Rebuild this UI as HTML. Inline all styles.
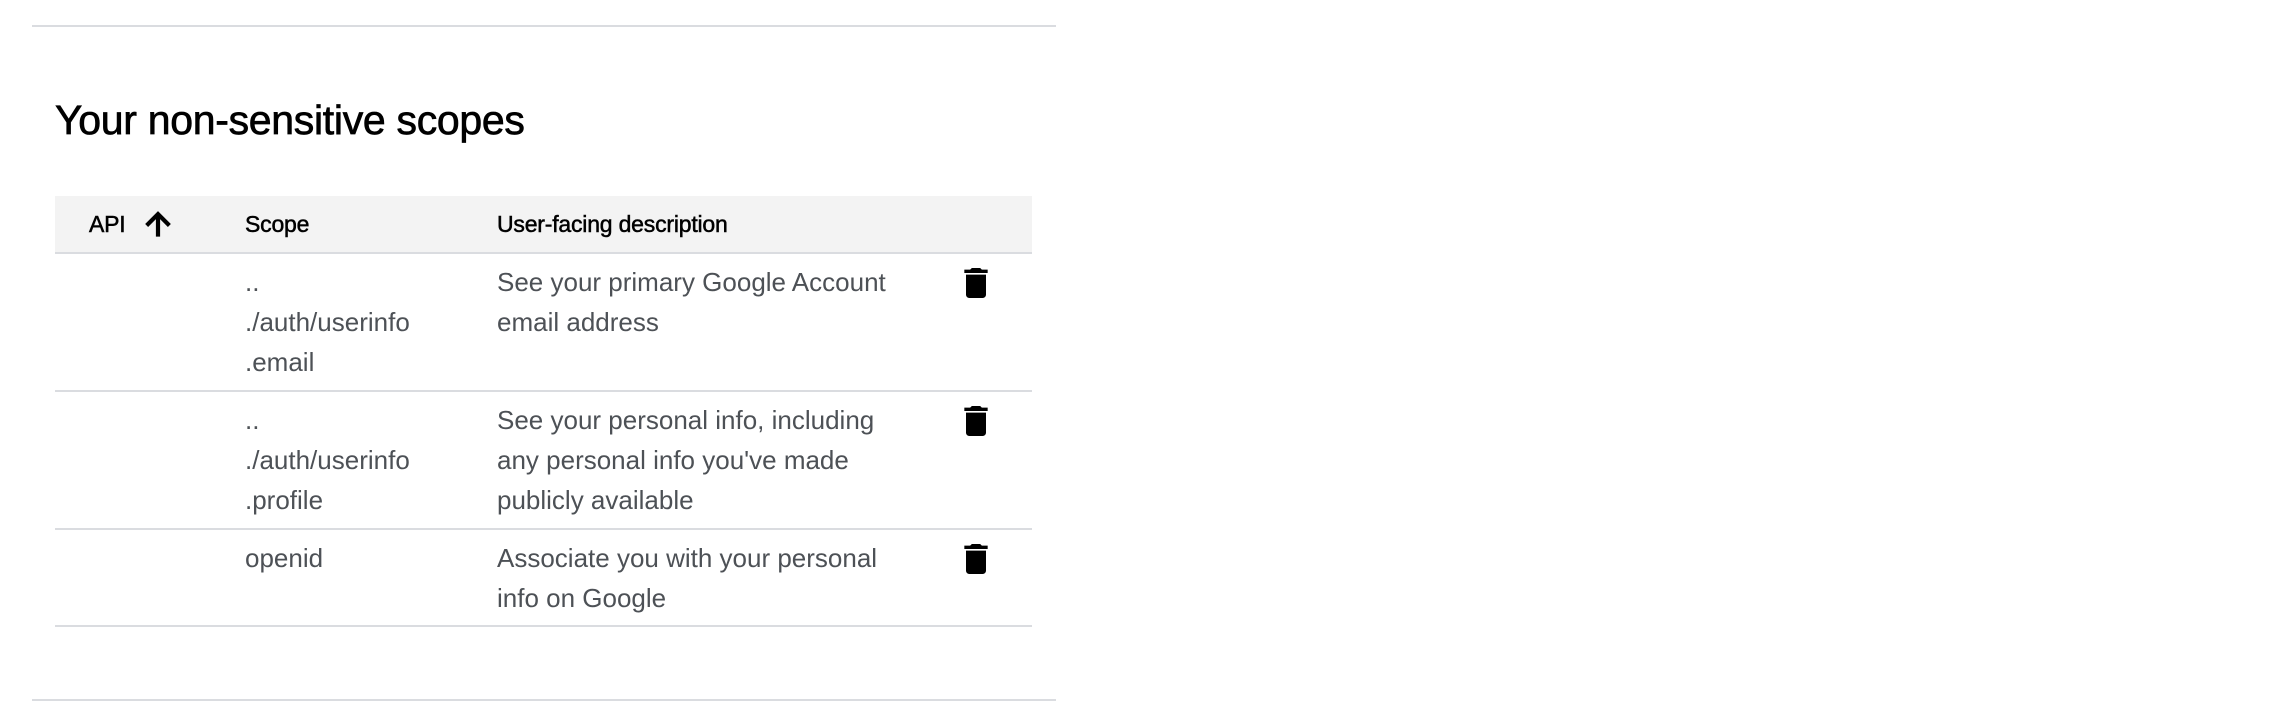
<!DOCTYPE html>
<html><head><style>
body{margin:0;width:2276px;height:726px;background:#fff;font-family:"Liberation Sans",sans-serif;position:relative;overflow:hidden}
.a{position:absolute;white-space:nowrap}
.line{position:absolute;height:2px;background:#dadce0}
.t{color:#4d5156;font-size:26px;line-height:40px}
.h{font-size:23px;color:#000;-webkit-text-stroke:0.5px #000;letter-spacing:-0.2px}
</style></head><body>
<div class="line" style="left:32px;top:25px;width:1024px"></div>
<div class="a" style="left:55px;top:97px;font-size:41px;color:#000;-webkit-text-stroke:0.7px #000;letter-spacing:-0.3px">Your non-sensitive scopes</div>
<div class="a" style="left:55px;top:196px;width:977px;height:57px;background:#f3f3f3"></div>
<div class="line" style="left:55px;top:252px;width:977px"></div>
<div class="a h" style="left:89px;top:211px">API</div>
<svg class="a" style="left:140px;top:206px" width="36" height="36" viewBox="0 0 24 24"><path d="M4 12l1.41 1.41L11 7.83V20h2V7.83l5.58 5.59L20 12l-8-8-8 8z" stroke="#000" stroke-width="0.8"/></svg>
<div class="a h" style="left:245px;top:211px">Scope</div>
<div class="a h" style="left:497px;top:211px">User-facing description</div>

<div class="a t" style="left:245px;top:262px">..<br>./auth/userinfo<br>.email</div>
<div class="a t" style="left:497px;top:262px">See your primary Google Account<br>email address</div>
<div class="line" style="left:55px;top:390px;width:977px"></div>
<div class="a t" style="left:245px;top:400px">..<br>./auth/userinfo<br>.profile</div>
<div class="a t" style="left:497px;top:400px">See your personal info, including<br>any personal info you've made<br>publicly available</div>
<div class="line" style="left:55px;top:528px;width:977px"></div>
<div class="a t" style="left:245px;top:538px">openid</div>
<div class="a t" style="left:497px;top:538px">Associate you with your personal<br>info on Google</div>
<div class="line" style="left:55px;top:625px;width:977px"></div>
<div class="line" style="left:32px;top:699px;width:1024px"></div>

<svg class="a" style="left:956px;top:263px" width="40" height="40" viewBox="0 0 24 24"><path d="M6 19c0 1.1.9 2 2 2h8c1.1 0 2-.9 2-2V7H6v12zM19 4h-3.5l-1-1h-5l-1 1H5v2h14V4z"/></svg>
<svg class="a" style="left:956px;top:401px" width="40" height="40" viewBox="0 0 24 24"><path d="M6 19c0 1.1.9 2 2 2h8c1.1 0 2-.9 2-2V7H6v12zM19 4h-3.5l-1-1h-5l-1 1H5v2h14V4z"/></svg>
<svg class="a" style="left:956px;top:539px" width="40" height="40" viewBox="0 0 24 24"><path d="M6 19c0 1.1.9 2 2 2h8c1.1 0 2-.9 2-2V7H6v12zM19 4h-3.5l-1-1h-5l-1 1H5v2h14V4z"/></svg>
</body></html>
